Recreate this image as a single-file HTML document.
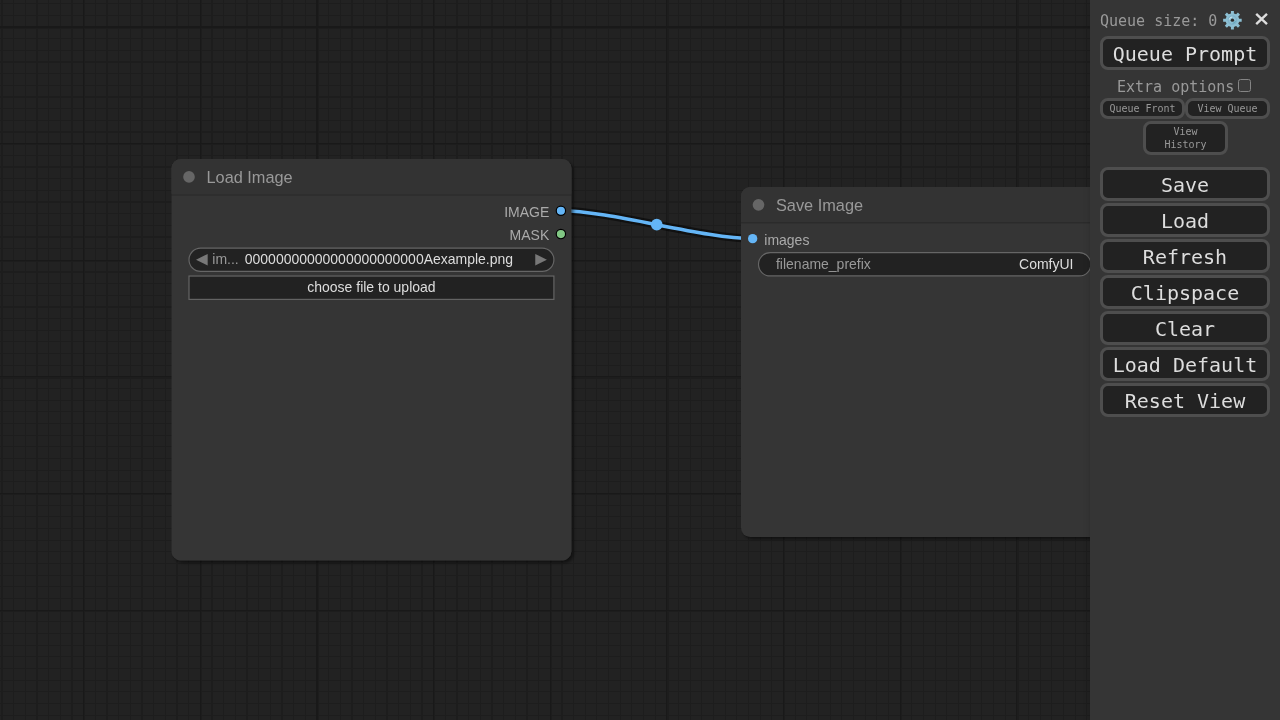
<!DOCTYPE html>
<html lang="en">
<head>
<meta charset="utf-8">
<title>ComfyUI</title>
<style>
html,body{margin:0;padding:0;width:1280px;height:720px;overflow:hidden;background:#222;}
body{position:relative;font-family:'Liberation Sans', sans-serif;}
#app{position:absolute;left:0;top:0;width:1280px;height:720px;overflow:hidden;will-change:transform;}
#graph{position:absolute;left:0;top:0;width:1280px;height:720px;display:block;}
#graph text{font-family:'Liberation Sans', sans-serif;}
.menu{position:absolute;left:1090px;top:0;width:190px;height:720px;background:#353535;color:#999;font-family:'DejaVu Sans Mono', 'Liberation Mono', monospace;font-size:15px;box-shadow:3px 3px 8px rgba(0,0,0,0.4);}
.menu .abs{position:absolute;white-space:nowrap;}
.btn,.sbtn{appearance:none;-webkit-appearance:none;margin:0;outline:0;cursor:pointer;display:block;}
.btn{position:absolute;box-sizing:border-box;border:3px solid #4e4e4e;border-radius:8px;background:#222;color:#ddd;font-family:'DejaVu Sans Mono', 'Liberation Mono', monospace;font-size:20px;text-align:center;left:10px;width:170px;height:34px;line-height:31.6px;padding:0;}
.sbtn{position:absolute;box-sizing:border-box;border:3px solid #4e4e4e;border-radius:8px;background:#222;color:#999;font-family:'DejaVu Sans Mono', 'Liberation Mono', monospace;font-size:10px;text-align:center;padding:0;}
</style>
</head>
<body>
<div id="app">
<svg id="graph" width="1280" height="720" viewBox="0 0 1280 720">
<defs>
<filter id="sh" x="-10%" y="-10%" width="125%" height="125%">
<feDropShadow dx="2" dy="2" stdDeviation="1.5" flood-color="#000" flood-opacity="0.5"/>
</filter>
</defs>
<rect width="1280" height="720" fill="#222222"/>
<g shape-rendering="crispEdges">
<rect x="1" y="0" width="2" height="720" fill="#1d1d1d"/>
<rect x="13" y="0" width="1" height="720" fill="#1d1d1d"/>
<rect x="25" y="0" width="1" height="720" fill="#1d1d1d"/>
<rect x="36" y="0" width="2" height="720" fill="#1d1d1d"/>
<rect x="48" y="0" width="1" height="720" fill="#1d1d1d"/>
<rect x="60" y="0" width="1" height="720" fill="#1d1d1d"/>
<rect x="71" y="0" width="2" height="720" fill="#1d1d1d"/>
<rect x="84" y="0" width="1" height="720" fill="#1d1d1d"/>
<rect x="95" y="0" width="1" height="720" fill="#1d1d1d"/>
<rect x="106" y="0" width="2" height="720" fill="#1d1d1d"/>
<rect x="118" y="0" width="1" height="720" fill="#1d1d1d"/>
<rect x="130" y="0" width="1" height="720" fill="#1d1d1d"/>
<rect x="141" y="0" width="2" height="720" fill="#1d1d1d"/>
<rect x="153" y="0" width="1" height="720" fill="#1d1d1d"/>
<rect x="165" y="0" width="1" height="720" fill="#1d1d1d"/>
<rect x="176" y="0" width="2" height="720" fill="#1d1d1d"/>
<rect x="188" y="0" width="1" height="720" fill="#1d1d1d"/>
<rect x="201" y="0" width="1" height="720" fill="#1d1d1d"/>
<rect x="211" y="0" width="2" height="720" fill="#1d1d1d"/>
<rect x="223" y="0" width="1" height="720" fill="#1d1d1d"/>
<rect x="235" y="0" width="1" height="720" fill="#1d1d1d"/>
<rect x="246" y="0" width="2" height="720" fill="#1d1d1d"/>
<rect x="258" y="0" width="1" height="720" fill="#1d1d1d"/>
<rect x="270" y="0" width="1" height="720" fill="#1d1d1d"/>
<rect x="281" y="0" width="2" height="720" fill="#1d1d1d"/>
<rect x="293" y="0" width="1" height="720" fill="#1d1d1d"/>
<rect x="305" y="0" width="1" height="720" fill="#1d1d1d"/>
<rect x="318" y="0" width="1" height="720" fill="#1d1d1d"/>
<rect x="328" y="0" width="1" height="720" fill="#1d1d1d"/>
<rect x="340" y="0" width="1" height="720" fill="#1d1d1d"/>
<rect x="351" y="0" width="2" height="720" fill="#1d1d1d"/>
<rect x="363" y="0" width="1" height="720" fill="#1d1d1d"/>
<rect x="375" y="0" width="1" height="720" fill="#1d1d1d"/>
<rect x="386" y="0" width="2" height="720" fill="#1d1d1d"/>
<rect x="398" y="0" width="1" height="720" fill="#1d1d1d"/>
<rect x="410" y="0" width="1" height="720" fill="#1d1d1d"/>
<rect x="421" y="0" width="2" height="720" fill="#1d1d1d"/>
<rect x="434" y="0" width="1" height="720" fill="#1d1d1d"/>
<rect x="445" y="0" width="1" height="720" fill="#1d1d1d"/>
<rect x="456" y="0" width="2" height="720" fill="#1d1d1d"/>
<rect x="468" y="0" width="1" height="720" fill="#1d1d1d"/>
<rect x="480" y="0" width="1" height="720" fill="#1d1d1d"/>
<rect x="491" y="0" width="2" height="720" fill="#1d1d1d"/>
<rect x="503" y="0" width="1" height="720" fill="#1d1d1d"/>
<rect x="515" y="0" width="1" height="720" fill="#1d1d1d"/>
<rect x="526" y="0" width="2" height="720" fill="#1d1d1d"/>
<rect x="538" y="0" width="1" height="720" fill="#1d1d1d"/>
<rect x="551" y="0" width="1" height="720" fill="#1d1d1d"/>
<rect x="561" y="0" width="2" height="720" fill="#1d1d1d"/>
<rect x="573" y="0" width="1" height="720" fill="#1d1d1d"/>
<rect x="585" y="0" width="1" height="720" fill="#1d1d1d"/>
<rect x="596" y="0" width="1" height="720" fill="#1d1d1d"/>
<rect x="608" y="0" width="1" height="720" fill="#1d1d1d"/>
<rect x="620" y="0" width="1" height="720" fill="#1d1d1d"/>
<rect x="631" y="0" width="1" height="720" fill="#1d1d1d"/>
<rect x="643" y="0" width="1" height="720" fill="#1d1d1d"/>
<rect x="655" y="0" width="1" height="720" fill="#1d1d1d"/>
<rect x="667" y="0" width="2" height="720" fill="#1d1d1d"/>
<rect x="678" y="0" width="1" height="720" fill="#1d1d1d"/>
<rect x="690" y="0" width="1" height="720" fill="#1d1d1d"/>
<rect x="701" y="0" width="1" height="720" fill="#1d1d1d"/>
<rect x="713" y="0" width="1" height="720" fill="#1d1d1d"/>
<rect x="725" y="0" width="1" height="720" fill="#1d1d1d"/>
<rect x="736" y="0" width="1" height="720" fill="#1d1d1d"/>
<rect x="748" y="0" width="1" height="720" fill="#1d1d1d"/>
<rect x="760" y="0" width="1" height="720" fill="#1d1d1d"/>
<rect x="771" y="0" width="1" height="720" fill="#1d1d1d"/>
<rect x="784" y="0" width="1" height="720" fill="#1d1d1d"/>
<rect x="795" y="0" width="1" height="720" fill="#1d1d1d"/>
<rect x="806" y="0" width="1" height="720" fill="#1d1d1d"/>
<rect x="818" y="0" width="1" height="720" fill="#1d1d1d"/>
<rect x="830" y="0" width="1" height="720" fill="#1d1d1d"/>
<rect x="841" y="0" width="1" height="720" fill="#1d1d1d"/>
<rect x="853" y="0" width="1" height="720" fill="#1d1d1d"/>
<rect x="865" y="0" width="1" height="720" fill="#1d1d1d"/>
<rect x="876" y="0" width="1" height="720" fill="#1d1d1d"/>
<rect x="888" y="0" width="1" height="720" fill="#1d1d1d"/>
<rect x="901" y="0" width="1" height="720" fill="#1d1d1d"/>
<rect x="911" y="0" width="1" height="720" fill="#1d1d1d"/>
<rect x="923" y="0" width="1" height="720" fill="#1d1d1d"/>
<rect x="935" y="0" width="1" height="720" fill="#1d1d1d"/>
<rect x="946" y="0" width="1" height="720" fill="#1d1d1d"/>
<rect x="958" y="0" width="1" height="720" fill="#1d1d1d"/>
<rect x="970" y="0" width="1" height="720" fill="#1d1d1d"/>
<rect x="981" y="0" width="1" height="720" fill="#1d1d1d"/>
<rect x="993" y="0" width="1" height="720" fill="#1d1d1d"/>
<rect x="1005" y="0" width="1" height="720" fill="#1d1d1d"/>
<rect x="1017" y="0" width="2" height="720" fill="#1d1d1d"/>
<rect x="1028" y="0" width="1" height="720" fill="#1d1d1d"/>
<rect x="1040" y="0" width="1" height="720" fill="#1d1d1d"/>
<rect x="1051" y="0" width="1" height="720" fill="#1d1d1d"/>
<rect x="1063" y="0" width="1" height="720" fill="#1d1d1d"/>
<rect x="1075" y="0" width="1" height="720" fill="#1d1d1d"/>
<rect x="1086" y="0" width="1" height="720" fill="#1d1d1d"/>
<rect x="1098" y="0" width="1" height="720" fill="#1d1d1d"/>
<rect x="1110" y="0" width="1" height="720" fill="#1d1d1d"/>
<rect x="1121" y="0" width="1" height="720" fill="#1d1d1d"/>
<rect x="1134" y="0" width="1" height="720" fill="#1d1d1d"/>
<rect x="1145" y="0" width="1" height="720" fill="#1d1d1d"/>
<rect x="1156" y="0" width="1" height="720" fill="#1d1d1d"/>
<rect x="1168" y="0" width="1" height="720" fill="#1d1d1d"/>
<rect x="1180" y="0" width="1" height="720" fill="#1d1d1d"/>
<rect x="1191" y="0" width="1" height="720" fill="#1d1d1d"/>
<rect x="1203" y="0" width="1" height="720" fill="#1d1d1d"/>
<rect x="1215" y="0" width="1" height="720" fill="#1d1d1d"/>
<rect x="1226" y="0" width="1" height="720" fill="#1d1d1d"/>
<rect x="1238" y="0" width="1" height="720" fill="#1d1d1d"/>
<rect x="1251" y="0" width="1" height="720" fill="#1d1d1d"/>
<rect x="1261" y="0" width="1" height="720" fill="#1d1d1d"/>
<rect x="1273" y="0" width="1" height="720" fill="#1d1d1d"/>
<rect x="0" y="3" width="1280" height="1" fill="#1d1d1d"/>
<rect x="0" y="15" width="1280" height="1" fill="#1d1d1d"/>
<rect x="0" y="28" width="1280" height="1" fill="#1d1d1d"/>
<rect x="0" y="38" width="1280" height="1" fill="#1d1d1d"/>
<rect x="0" y="50" width="1280" height="1" fill="#1d1d1d"/>
<rect x="0" y="61" width="1280" height="2" fill="#1d1d1d"/>
<rect x="0" y="73" width="1280" height="1" fill="#1d1d1d"/>
<rect x="0" y="85" width="1280" height="1" fill="#1d1d1d"/>
<rect x="0" y="96" width="1280" height="2" fill="#1d1d1d"/>
<rect x="0" y="108" width="1280" height="1" fill="#1d1d1d"/>
<rect x="0" y="120" width="1280" height="1" fill="#1d1d1d"/>
<rect x="0" y="131" width="1280" height="2" fill="#1d1d1d"/>
<rect x="0" y="144" width="1280" height="1" fill="#1d1d1d"/>
<rect x="0" y="155" width="1280" height="1" fill="#1d1d1d"/>
<rect x="0" y="166" width="1280" height="2" fill="#1d1d1d"/>
<rect x="0" y="178" width="1280" height="1" fill="#1d1d1d"/>
<rect x="0" y="190" width="1280" height="1" fill="#1d1d1d"/>
<rect x="0" y="201" width="1280" height="2" fill="#1d1d1d"/>
<rect x="0" y="213" width="1280" height="1" fill="#1d1d1d"/>
<rect x="0" y="225" width="1280" height="1" fill="#1d1d1d"/>
<rect x="0" y="236" width="1280" height="2" fill="#1d1d1d"/>
<rect x="0" y="248" width="1280" height="1" fill="#1d1d1d"/>
<rect x="0" y="261" width="1280" height="1" fill="#1d1d1d"/>
<rect x="0" y="271" width="1280" height="2" fill="#1d1d1d"/>
<rect x="0" y="283" width="1280" height="1" fill="#1d1d1d"/>
<rect x="0" y="295" width="1280" height="1" fill="#1d1d1d"/>
<rect x="0" y="306" width="1280" height="2" fill="#1d1d1d"/>
<rect x="0" y="318" width="1280" height="1" fill="#1d1d1d"/>
<rect x="0" y="330" width="1280" height="1" fill="#1d1d1d"/>
<rect x="0" y="341" width="1280" height="1" fill="#1d1d1d"/>
<rect x="0" y="353" width="1280" height="1" fill="#1d1d1d"/>
<rect x="0" y="365" width="1280" height="1" fill="#1d1d1d"/>
<rect x="0" y="377" width="1280" height="2" fill="#1d1d1d"/>
<rect x="0" y="388" width="1280" height="1" fill="#1d1d1d"/>
<rect x="0" y="400" width="1280" height="1" fill="#1d1d1d"/>
<rect x="0" y="411" width="1280" height="1" fill="#1d1d1d"/>
<rect x="0" y="423" width="1280" height="1" fill="#1d1d1d"/>
<rect x="0" y="435" width="1280" height="1" fill="#1d1d1d"/>
<rect x="0" y="446" width="1280" height="1" fill="#1d1d1d"/>
<rect x="0" y="458" width="1280" height="1" fill="#1d1d1d"/>
<rect x="0" y="470" width="1280" height="1" fill="#1d1d1d"/>
<rect x="0" y="481" width="1280" height="1" fill="#1d1d1d"/>
<rect x="0" y="494" width="1280" height="1" fill="#1d1d1d"/>
<rect x="0" y="505" width="1280" height="1" fill="#1d1d1d"/>
<rect x="0" y="516" width="1280" height="1" fill="#1d1d1d"/>
<rect x="0" y="528" width="1280" height="1" fill="#1d1d1d"/>
<rect x="0" y="540" width="1280" height="1" fill="#1d1d1d"/>
<rect x="0" y="551" width="1280" height="1" fill="#1d1d1d"/>
<rect x="0" y="563" width="1280" height="1" fill="#1d1d1d"/>
<rect x="0" y="575" width="1280" height="1" fill="#1d1d1d"/>
<rect x="0" y="586" width="1280" height="1" fill="#1d1d1d"/>
<rect x="0" y="598" width="1280" height="1" fill="#1d1d1d"/>
<rect x="0" y="611" width="1280" height="1" fill="#1d1d1d"/>
<rect x="0" y="621" width="1280" height="1" fill="#1d1d1d"/>
<rect x="0" y="633" width="1280" height="1" fill="#1d1d1d"/>
<rect x="0" y="645" width="1280" height="1" fill="#1d1d1d"/>
<rect x="0" y="656" width="1280" height="1" fill="#1d1d1d"/>
<rect x="0" y="668" width="1280" height="1" fill="#1d1d1d"/>
<rect x="0" y="680" width="1280" height="1" fill="#1d1d1d"/>
<rect x="0" y="691" width="1280" height="1" fill="#1d1d1d"/>
<rect x="0" y="703" width="1280" height="1" fill="#1d1d1d"/>
<rect x="0" y="715" width="1280" height="1" fill="#1d1d1d"/>
<rect x="83" y="0" width="1" height="720" fill="#191919"/>
<rect x="200" y="0" width="1" height="720" fill="#191919"/>
<rect x="316" y="0" width="2" height="720" fill="#191919"/>
<rect x="433" y="0" width="1" height="720" fill="#191919"/>
<rect x="550" y="0" width="1" height="720" fill="#191919"/>
<rect x="666" y="0" width="1" height="720" fill="#191919"/>
<rect x="783" y="0" width="1" height="720" fill="#191919"/>
<rect x="900" y="0" width="1" height="720" fill="#191919"/>
<rect x="1016" y="0" width="1" height="720" fill="#191919"/>
<rect x="1133" y="0" width="1" height="720" fill="#191919"/>
<rect x="1250" y="0" width="1" height="720" fill="#191919"/>
<rect x="0" y="26" width="1280" height="2" fill="#191919"/>
<rect x="0" y="143" width="1280" height="1" fill="#191919"/>
<rect x="0" y="260" width="1280" height="1" fill="#191919"/>
<rect x="0" y="376" width="1280" height="1" fill="#191919"/>
<rect x="0" y="493" width="1280" height="1" fill="#191919"/>
<rect x="0" y="610" width="1280" height="1" fill="#191919"/>
</g>
<path d="M560.9 210.73 C609.35 210.73 704.22 238.63 752.66 238.63" fill="none" stroke="#000" stroke-opacity="0.5" stroke-width="8.16" stroke-linejoin="round"/><path d="M560.9 210.73 C609.35 210.73 704.22 238.63 752.66 238.63" fill="none" stroke="#64B5F6" stroke-width="3.5" stroke-linejoin="round"/><circle cx="656.78" cy="224.68" r="5.83" fill="#64B5F6"/>
<g transform="translate(171.5 194.4) scale(1.166400)">
<g filter="url(#sh)" fill="#353535"><rect x="0" y="-30.35" width="342.85" height="344.31" rx="8" ry="8"/></g>
<rect x="0" y="-1" width="342.85" height="2" fill="#000" fill-opacity="0.2"/>
<path d="M0 0 V-22.35 A8 8 0 0 1 8 -30.35 H334.85 A8 8 0 0 1 342.85 -22.35 V0 Z" fill="#333"/>
<circle cx="15" cy="-15" r="5" fill="#666"/>
<text x="30" y="-9.55" font-size="14" fill="#999">Load Image</text>
<circle cx="333.85" cy="14" r="4" fill="#64B5F6" stroke="#000" stroke-width="1"/>
<circle cx="333.85" cy="34" r="4" fill="#81C784" stroke="#000" stroke-width="1"/>
<text x="323.85" y="19.35" font-size="12" fill="#AAA" text-anchor="end">IMAGE</text>
<text x="323.85" y="39.35" font-size="12" fill="#AAA" text-anchor="end">MASK</text>
<rect x="15" y="46" width="312.85" height="20" rx="10.0" ry="10.0" fill="#222" stroke="#666" stroke-width="1"/>
<path d="M31 51 L21 56 L31 61 Z" fill="#787878"/>
<path d="M311.85 51 L321.85 56 L311.85 61 Z" fill="#787878"/>
<text x="35" y="60" font-size="12" fill="#999">im...</text>
<text x="292.85" y="60" font-size="12" fill="#DDD" text-anchor="end">00000000000000000000000Aexample.png</text>
<rect x="15" y="70" width="312.85" height="20" fill="#222" stroke="#666" stroke-width="1"/>
<text x="171.42" y="84" font-size="12" fill="#DDD" text-anchor="middle">choose file to upload</text>
</g>
<g transform="translate(741 222.3) scale(1.166400)">
<g filter="url(#sh)" fill="#353535"><rect x="0" y="-30.35" width="315" height="300.24" rx="8" ry="8"/></g>
<rect x="0" y="-1" width="315" height="2" fill="#000" fill-opacity="0.2"/>
<path d="M0 0 V-22.35 A8 8 0 0 1 8 -30.35 H307 A8 8 0 0 1 315 -22.35 V0 Z" fill="#333"/>
<circle cx="15" cy="-15" r="5" fill="#666"/>
<text x="30" y="-9.55" font-size="14" fill="#999">Save Image</text>
<circle cx="10" cy="14" r="4" fill="#64B5F6"/>
<text x="20" y="19.35" font-size="12" fill="#AAA">images</text>
<rect x="15" y="26" width="285" height="20" rx="10.0" ry="10.0" fill="#222" stroke="#666" stroke-width="1"/>
<text x="30" y="40" font-size="12" fill="#999">filename_prefix</text>
<text x="285" y="40" font-size="12" fill="#DDD" text-anchor="end">ComfyUI</text>
</g>
</svg>
<div class="menu">
<span class="abs" style="left:10px;top:11px;line-height:20px;">Queue size: 0</span>
<svg class="abs" style="left:131px;top:9px;" width="22" height="22" viewBox="0 0 22 22"><g transform="translate(11.41 11.16)"><path d="M-1.51 -6.73 L-1.47 -9.28 L1.47 -9.28 L1.51 -6.73 L3.7 -5.83 L5.53 -7.6 L7.6 -5.53 L5.83 -3.7 L6.73 -1.51 L9.28 -1.47 L9.28 1.47 L6.73 1.51 L5.83 3.7 L7.6 5.53 L5.53 7.6 L3.7 5.83 L1.51 6.73 L1.47 9.28 L-1.47 9.28 L-1.51 6.73 L-3.7 5.83 L-5.53 7.6 L-7.6 5.53 L-5.83 3.7 L-6.73 1.51 L-9.28 1.47 L-9.28 -1.47 L-6.73 -1.51 L-5.83 -3.7 L-7.6 -5.53 L-5.53 -7.6 L-3.7 -5.83Z" fill="#8cbfd3"/><circle cx="0" cy="0" r="4.2" fill="none" stroke="#7fb2c9" stroke-width="1.2"/><path d="M-3.2 -0.6 A3.3 3.3 0 0 1 -0.2 -3.2" fill="none" stroke="#cfe8f1" stroke-width="1"/><path d="M3.1 0.8 A3.2 3.2 0 0 1 0.2 3.2" fill="none" stroke="#5fa3b8" stroke-width="1"/><circle cx="0" cy="0" r="1.7" fill="#2b2b2b"/></g></svg>
<svg class="abs" style="left:163px;top:11px;" width="16" height="16" viewBox="0 0 16 16"><path transform="translate(8.6 8)" d="M-5.4 -5.1 L5.4 5.1 M5.4 -5.1 L-5.4 5.1" stroke="#ddd" stroke-width="2.4" fill="none"/></svg>
<button class="btn" style="top:36px;">Queue Prompt</button>
<label class="abs" style="left:27px;top:77px;line-height:20px;">Extra options</label>
<input type="checkbox" class="abs" style="appearance:none;-webkit-appearance:none;margin:0;padding:0;box-sizing:content-box;left:148px;top:79px;width:11px;height:11px;border:1px solid #858585;border-radius:2.5px;background:#3b3b3b;">
<button class="sbtn" style="left:10px;top:98px;width:85px;height:21px;line-height:16.5px;">Queue Front</button>
<button class="sbtn" style="left:95px;top:98px;width:85px;height:21px;line-height:16.5px;">View Queue</button>
<button class="sbtn" style="left:53px;top:121px;width:85px;height:34px;line-height:13px;white-space:normal;">View<br>History</button>
<button class="btn" style="top:167px;">Save</button>
<button class="btn" style="top:203px;">Load</button>
<button class="btn" style="top:239px;">Refresh</button>
<button class="btn" style="top:275px;">Clipspace</button>
<button class="btn" style="top:311px;">Clear</button>
<button class="btn" style="top:347px;">Load Default</button>
<button class="btn" style="top:383px;">Reset View</button>
</div>
</div>
</body>
</html>
